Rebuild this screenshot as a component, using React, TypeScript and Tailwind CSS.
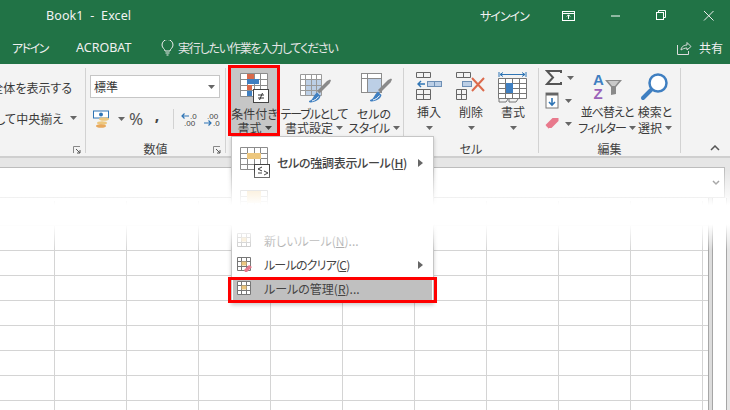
import React from "react";

const Caret = ({ c = "#666" }: { c?: string }) => (
  <svg width="7" height="4" viewBox="0 0 7 4" className="shrink-0"><path d="M0 0h7L3.5 4z" fill={c} /></svg>
);

const Launcher = () => (
  <svg width="8" height="8" viewBox="0 0 8 8"><path d="M0.5 7V0.5H7" fill="none" stroke="#888" /><path d="M3 3l4 4M7 4v3H4" fill="none" stroke="#555" /></svg>
);

const GridLines = ({ x, y, w, h, cols, rows, c = "#777" }: { x: number; y: number; w: number; h: number; cols: number; rows: number; c?: string }) => {
  const d: string[] = [];
  for (let i = 0; i <= cols; i++) d.push(`M${x + Math.round((w * i) / cols)} ${y}v${h}`);
  for (let i = 0; i <= rows; i++) d.push(`M${x} ${y + Math.round((h * i) / rows)}h${w}`);
  return <path d={d.join("")} fill="none" stroke={c} strokeWidth="1" />;
};

const Brush = () => (
  <g>
    <path d="M17 17l10-10 3-1.500 1 1-1.500 3-10 10z" fill="#8a8a8a" />
    <path d="M10 26.500c3-.5 3-5 7-8l3.500 3.500c-1 4-5 6-10 6.500-2 0-2-1.500-.5-2z" fill="#3f7fc1" />
    <path d="M12 27c2-.5 5-2 6.500-4.500" fill="none" stroke="#fff" strokeWidth="1" />
  </g>
);

const CondIcon = () => (
  <svg width="30" height="32" viewBox="0 0 30 32" className="shrink-0">
    <rect x="0.5" y="1" width="27" height="22" fill="#fff" />
    <GridLines x={0.5} y={0.5} w={27} h={23} cols={4} rows={4} c="#8c8c8c" />
    <rect x="7" y="1" width="7" height="5" fill="#d9694a" />
    <rect x="7" y="6" width="12" height="5" fill="#3f7fc1" />
    <rect x="7" y="12" width="5" height="5" fill="#d9694a" />
    <rect x="7" y="18" width="5" height="5" fill="#3f7fc1" />
    <rect x="13.5" y="16.5" width="15" height="13" fill="#fff" stroke="#444" />
    <path d="M18 22h6M18 25h6M19.500 27l3-7" fill="none" stroke="#333" />
  </svg>
);

const TableIcon = () => (
  <svg width="32" height="32" viewBox="0 0 32 32" className="shrink-0">
    <rect x="0.5" y="0.5" width="21" height="21" fill="#fff" />
    <rect x="6" y="6" width="15.5" height="15.5" fill="#bccfe6" />
    <GridLines x={0.5} y={0.5} w={21} h={21} cols={4} rows={4} c="#9a9a9a" />
    <Brush />
  </svg>
);

const StyleIcon = () => (
  <svg width="32" height="32" viewBox="0 0 32 32" className="shrink-0">
    <rect x="0.5" y="0.5" width="20" height="19" fill="#fff" stroke="#8c8c8c" />
    <rect x="6.5" y="5.5" width="14" height="14" fill="#bccfe6" stroke="#8c8c8c" />
    <path d="M0.5 5.5h6M6.500 0.5v5" stroke="#8c8c8c" />
    <Brush />
  </svg>
);

const InsertIcon = () => (
  <svg width="28" height="29" viewBox="0 0 28 29" className="shrink-0">
    <GridLines x={1.5} y={0.5} w={14} h={5} cols={2} rows={1} c="#666" />
    <GridLines x={1.5} y={17.5} w={14} h={10} cols={2} rows={2} c="#666" />
    <rect x="12.5" y="9.5" width="14" height="5" fill="#bccfe6" stroke="#6d8fb5" />
    <path d="M19.500 9.500v5" stroke="#6d8fb5" />
    <path d="M3 12h7M6 9l-3 3 3 3" fill="none" stroke="#2f75b5" strokeWidth="1.4" />
  </svg>
);

const DeleteIcon = () => (
  <svg width="32" height="29" viewBox="0 0 32 29" className="shrink-0">
    <GridLines x={1.5} y={0.5} w={14} h={5} cols={2} rows={1} c="#666" />
    <GridLines x={1.5} y={17.5} w={10} h={10} cols={2} rows={2} c="#666" />
    <rect x="7.5" y="9.5" width="9" height="5" fill="#bccfe6" stroke="#6d8fb5" />
    <path d="M17 6l12 13M29 6L17 19" fill="none" stroke="#dc6a4c" strokeWidth="2" />
  </svg>
);

const FormatIcon = () => (
  <svg width="30" height="33" viewBox="0 0 30 33" className="shrink-0">
    <path d="M1 1v5M28 1v5M2 3.500h25" fill="none" stroke="#2f75b5" />
    <path d="M2 3.500l3-2M2 3.500l3 2M27 3.500l-3-2M27 3.500l-3 2" fill="none" stroke="#2f75b5" />
    <rect x="1" y="7" width="27" height="20" fill="#fff" />
    <GridLines x={0.5} y={7.5} w={28} h={20} cols={4} rows={4} c="#777" />
    <rect x="8" y="12" width="7" height="10" fill="#3f7fc1" />
    <path d="M1 28v3h7l2-3M11 28v3h7l2-3" fill="none" stroke="#777" />
  </svg>
);

const SortIcon = () => (
  <svg width="34" height="31" viewBox="0 0 34 31" className="shrink-0">
    <path d="M12 8h17l-6 7v7l-5 1v-8z" fill="#8a8a8a" />
    <path d="M15 9h11l-4 5h-3z" fill="#c9c9c9" />
    <text x="0" y="13" fontSize="15" fontWeight="700" fill="#3f7fc1" fontFamily="'Liberation Sans',sans-serif">A</text>
    <text x="0.5" y="27" fontSize="15" fontWeight="700" fill="#9a62b8" fontFamily="'Liberation Sans',sans-serif">Z</text>
  </svg>
);

const SearchIcon = () => (
  <svg width="30" height="29" viewBox="0 0 30 29" className="shrink-0">
    <circle cx="18" cy="10" r="8.500" fill="#fff" stroke="#3f7fc1" strokeWidth="2.5" />
    <path d="M11 17L3 25" stroke="#3f7fc1" strokeWidth="4" strokeLinecap="round" />
  </svg>
);

const MiniTable = ({ clear, faded }: { clear?: boolean; faded?: boolean }) => (
  <svg width="16" height="16" viewBox="0 0 16 16" className={`shrink-0 ${faded ? "opacity-40" : ""}`}>
    <rect x="0.5" y="0.5" width="13" height="13" fill="#fff" />
    <GridLines x={0.5} y={0.5} w={13} h={13} cols={3} rows={3} c="#777" />
    <rect x="4.5" y="4.5" width="5" height="4" fill="#edc77e" />
    {clear && <path d="M7 13l5-5 3 2-5 5H8z" fill="#e8798c" />}
  </svg>
);

const Btn = ({ w, box, pt, icon, l1, l2, l2c = "h-[15px]" }: { w: string; box: string; pt: string; icon: React.ReactNode; l1: React.ReactNode; l2: React.ReactNode; l2c?: string }) => (
  <div className={`flex flex-col items-center shrink-0 ${w}`}>
    <div className={`${box} ${pt} shrink-0 flex justify-center`}>{icon}</div>
    <span className="h-[13px] whitespace-nowrap flex items-center">{l1}</span>
    <span className={`${l2c} whitespace-nowrap flex items-center gap-[3px]`}>{l2}</span>
  </div>
);

const Group = ({ w, label, launcher, children }: { w: string; label?: string; launcher?: boolean; children: React.ReactNode }) => (
  <div className={`relative shrink-0 ${w} h-[85px] mt-[4px] border-r border-[#d2d2d2] flex flex-col`}>
    <div className="h-[72px] shrink-0 flex">{children}</div>
    <div className="h-[15px] shrink-0 mt-px flex items-center justify-center text-[12px] leading-[15px] text-[#444]">{label}</div>
    {launcher && <div className="absolute right-[4px] -bottom-px flex"><Launcher /></div>}
  </div>
);

const COLS = [55, 72, 72, 72, 72, 72, 72, 72, 72, 72, 6];

export default function App() {
  return (
    <div className="relative w-[730px] h-[410px] overflow-hidden bg-white text-[#3a3a3a] font-['Noto_Sans_CJK_JP','Noto_Sans',sans-serif] [font-feature-settings:'palt']">
      {/* title */}
      <div className="h-[32px] bg-[#217346] text-[#f2f2f2] flex items-center text-[12.5px] font-['Noto_Sans','Noto_Sans_CJK_JP',sans-serif]">
        <span className="ml-[46px] w-[434px] whitespace-pre tracking-[0.1px]">Book1  -  Excel</span>
        <span className="w-[82px] text-[12px] tracking-[-1px] font-['Noto_Sans_CJK_JP',sans-serif]">サインイン</span>
        <svg width="14" height="11" viewBox="0 0 14 11" fill="none" stroke="#fff"><rect x="0.5" y="0.5" width="12" height="9" /><path d="M0.5 2.500h12M6.500 8V4M4.800 5.500l1.700-1.700 1.700 1.700" /></svg>
        <svg className="ml-[34px]" width="12" height="3" viewBox="0 0 12 3"><path d="M1 1h9" stroke="#fff" /></svg>
        <svg className="ml-[34px]" width="12" height="12" viewBox="0 0 12 12" fill="none" stroke="#fff"><rect x="0.5" y="2.500" width="7" height="7" /><path d="M2.500 2.500V0.500h7v7H7.500" /></svg>
        <svg className="ml-[35px]" width="12" height="12" viewBox="0 0 12 12" fill="none" stroke="#eee"><path d="M1 1l9.500 9.500M10.500 1L1 10.500" /></svg>
      </div>
      {/* tabs */}
      <div className="h-[32px] bg-[#217346] text-[#f0f0f0] flex items-center text-[12px]">
        <span className="ml-[12px] w-[64px] tracking-[-1.5px]">アドイン</span>
        <span className="w-[85px] font-['Noto_Sans',sans-serif] text-[12.5px]">ACROBAT</span>
        <svg width="13" height="16" viewBox="0 0 13 16" fill="none" stroke="#eee"><path d="M4 11c0-2-3-3-3-6a5 5 0 0 1 11 0c0 3-3 4-3 6zM4.500 13h4M5.500 15h2" /></svg>
        <span className="ml-[4px] w-[499px] whitespace-nowrap text-[#e6e6e6] tracking-[-1.2px]">実行したい作業を入力してください</span>
        <svg width="15" height="14" viewBox="0 0 15 14" fill="none" stroke="#ddd"><path d="M0.500 4v9.500h11V10M4 9c0-3 3-5 6-5V1.500L14 5.500 10 9V7C7.500 7 5.500 8 4 9z" /></svg>
        <span className="ml-[7px]">共有</span>
      </div>
      {/* ribbon */}
      <div className="h-[94px] bg-[#f3f3f3] border-b-2 border-[#cfcfcf] flex text-[12px] leading-[15px]">
        <Group w="w-[86px]" launcher>
          <div className="w-[85px] overflow-hidden flex flex-col">
            <div className="mt-[12px] h-[16px] w-[72px] flex justify-end whitespace-nowrap">折り返して全体を表示する</div>
            <div className="mt-[14px] h-[16px] w-[77px] flex justify-end items-center whitespace-nowrap gap-[7px]">セルを結合して中央揃え<Caret /></div>
          </div>
        </Group>
        <Group w="w-[140px]" label="数値" launcher>
          <div className="ml-[4px] w-[130px] flex flex-col">
            <div className="mt-[7px] h-[23px] bg-white border border-[#c6c6c6] flex items-center justify-between pl-[3px] pr-[4px]">
              <span>標準</span><Caret />
            </div>
            <div className="mt-[10px] h-[22px] flex items-center">
              <svg className="ml-[3px] shrink-0" width="18" height="18" viewBox="0 0 18 18"><rect x="0.5" y="1" width="15" height="7" fill="#fff" stroke="#2f75b5" /><circle cx="8" cy="4.500" r="2" fill="#2f75b5" /><ellipse cx="11" cy="9" rx="5" ry="1.800" fill="#edc77e" /><ellipse cx="9" cy="13" rx="5" ry="1.800" fill="#edc77e" /><ellipse cx="8" cy="16" rx="5" ry="1.800" fill="#e8a85c" /></svg>
              <span className="ml-[7px] flex"><Caret /></span>
              <span className="ml-[4px] -mt-[2px] w-[27px] text-[17px] text-[#555] font-['Noto_Sans',sans-serif]">%</span>
              <span className="w-[19px] -mt-[9px] font-bold text-[16px] text-[#444] leading-[12px] font-['Noto_Sans',sans-serif]">,</span>
              <span className="h-[20px] w-px bg-[#d2d2d2]" />
              <svg className="ml-[7px] shrink-0" width="17" height="15" viewBox="0 0 17 15"><path d="M8 4H1M3.500 1.500L1 4l2.500 2.500" fill="none" stroke="#2f75b5" strokeWidth="1.2" /><text x="9" y="6.500" fontSize="8" fill="#444" fontFamily="'Liberation Sans',sans-serif">.0</text><text x="3" y="14" fontSize="8" fill="#444" fontFamily="'Liberation Sans',sans-serif">.00</text></svg>
              <svg className="ml-[5px] shrink-0" width="17" height="15" viewBox="0 0 17 15"><text x="4" y="6.500" fontSize="8" fill="#444" fontFamily="'Liberation Sans',sans-serif">.00</text><path d="M1 11h7M5.500 8.500L8 11l-2.500 2.500" fill="none" stroke="#2f75b5" strokeWidth="1.2" /><text x="10" y="14" fontSize="8" fill="#444" fontFamily="'Liberation Sans',sans-serif">.0</text></svg>
            </div>
          </div>
        </Group>
        <Group w="w-[178px]">
          <div className="ml-[5px] h-[66px] bg-[#c6c6c6] w-[47px] shrink-0">
            <Btn w="w-[47px]" box="h-[39px]" pt="pt-[5px]" icon={<CondIcon />} l1="条件付き" l2={<>書式<Caret c="#444" /></>} />
          </div>
          <Btn w="w-[72px]" box="h-[39px] pl-[4px]" pt="pt-[6px]" icon={<TableIcon />} l1={<span className="tracking-[-1.2px]">テーブルとして</span>} l2={<>書式設定<Caret /></>} />
          <Btn w="w-[48px]" box="h-[39px] pl-[6px]" pt="pt-[5px]" icon={<StyleIcon />} l1="セルの" l2={<><span className="tracking-[-0.5px]">スタイル</span><Caret /></>} />
        </Group>
        <Group w="w-[135px]" label="セル">
          <div className="ml-[4px] flex">
            <Btn w="w-[42px]" box="h-[37px]" pt="pt-[4px]" icon={<InsertIcon />} l1="挿入" l2={<span className="mt-[5px] flex"><Caret /></span>} />
            <Btn w="w-[42px]" box="h-[37px]" pt="pt-[4px]" icon={<DeleteIcon />} l1="削除" l2={<span className="mt-[5px] flex"><Caret /></span>} />
            <Btn w="w-[42px]" box="h-[37px]" pt="pt-[3px]" icon={<FormatIcon />} l1="書式" l2={<span className="mt-[5px] flex"><Caret /></span>} />
          </div>
        </Group>
        <Group w="w-[142px]" label="編集">
          <div className="ml-[6px] w-[34px] flex flex-col pt-[1px]">
            <div className="flex items-center gap-[5px] h-[17px]">
              <svg className="shrink-0" width="17" height="15" viewBox="0 0 17 15"><path d="M16 3V1H2l6 6.500L2 14h14v-2" fill="none" stroke="#555" strokeWidth="2" /></svg><Caret />
            </div>
            <div className="mt-[6px] flex items-center gap-[5px] h-[17px]">
              <svg className="shrink-0" width="15" height="17" viewBox="0 0 15 17"><rect x="1" y="1" width="12" height="15" fill="#fff" stroke="#777" /><rect x="1" y="1" width="12" height="2.500" fill="#666" /><path d="M7 6v7M4 10l3 3 3-3" fill="none" stroke="#2f75b5" strokeWidth="1.6" /></svg><Caret />
            </div>
            <div className="mt-[7px] flex items-center gap-[5px] h-[15px]">
              <svg className="shrink-0" width="15" height="13" viewBox="0 0 15 13"><path d="M0.500 8l7-7h6v3l-7 7H3z" fill="#e8798c" /><path d="M1 9l3 3" stroke="#f5c6ce" /></svg><Caret />
            </div>
          </div>
          <Btn w="ml-[1px] w-[54px]" box="h-[37px] pl-[6px]" pt="pt-[4px]" l2c="h-[15px] mt-[2px]" icon={<SortIcon />} l1={<span className="tracking-[-1px]">並べ替えと</span>} l2={<><span className="tracking-[-1px]">フィルター</span><Caret /></>} />
          <Btn w="ml-[4px] w-[34px]" box="h-[37px]" pt="pt-[5px]" l2c="h-[15px] mt-[2px]" icon={<SearchIcon />} l1="検索と" l2={<>選択<Caret /></>} />
        </Group>
        <div className="flex-1 flex items-end justify-end pr-[10px] pb-[5px]">
          <svg width="10" height="6" viewBox="0 0 10 6"><path d="M1 5l4-4 4 4" fill="none" stroke="#555" strokeWidth="1.500" /></svg>
        </div>
      </div>
      {/* formula bar */}
      <div className="h-[40px] bg-[#e6e6e6] pt-[9px] pr-[5px]">
        <div className="h-[31px] bg-white border border-l-0 border-[#bdbdbd] flex items-center justify-end pr-[4px]">
          <svg width="8" height="6" viewBox="0 0 8 6"><path d="M1 1l3 3 3-3" fill="none" stroke="#777" strokeWidth="1.500" /></svg>
        </div>
      </div>
      {/* sheet */}
      <div className="flex bg-white h-[212px]">
        <div className="w-[708px] overflow-hidden pt-[3px]">
          {[0, 1, 2, 3, 4, 5, 6, 7, 8].map((r) => (
            <div key={r} className="flex h-[25px] border-b border-[#d4d4d4]">
              {COLS.map((w, i) => (
                <div key={i} style={{ width: w }} className="shrink-0 border-r border-[#d4d4d4]" />
              ))}
            </div>
          ))}
        </div>
        <div className="w-[5px] bg-[#dcdcdc] border-x border-[#a6a6a6]" />
        <div className="w-[13px]" />
        <div className="w-[1px] bg-[#a6a6a6]" />
        <div className="flex-1 bg-[#e6e6e6]" />
      </div>

      {/* dropdown menu */}
      <div className="absolute left-[231px] top-[136px] w-[203px] h-[167px] bg-white border border-[#c6c6c6] shadow-[0_2px_4px_rgba(0,0,0,0.2)] flex flex-col text-[12px] text-[#444]">
        <div className="h-[44px] shrink-0 flex items-center pl-[8px] pr-[10px] pt-[7px]">
          <svg className="shrink-0" width="32" height="32" viewBox="0 0 32 32">
            <rect x="0.5" y="0.5" width="27" height="22" fill="#fff" />
            <GridLines x={0.5} y={0.5} w={27} h={22} cols={4} rows={4} c="#8c8c8c" />
            <rect x="7" y="6" width="14" height="6" fill="#edc77e" />
            <rect x="14.5" y="17.5" width="15" height="13" fill="#fff" stroke="#444" />
            <path d="M22 20l-4 2 4 2M18 26h4M24 24l4 2-4 2" fill="none" stroke="#333" />
          </svg>
          <span className="ml-[5px] font-medium whitespace-nowrap tracking-[-0.3px]">セルの強調表示ルール(<span className="underline">H</span>)</span>
          <svg className="ml-auto shrink-0" width="5" height="8" viewBox="0 0 5 8"><path d="M0 0l5 4-5 4z" fill="#666" /></svg>
        </div>
        <div className="h-[48px] shrink-0 pl-[8px] pt-[9px]">
          <svg width="28" height="18" viewBox="0 0 28 18"><GridLines x={0.5} y={0.5} w={27} h={17} cols={4} rows={3} c="#c8c8c8" /><rect x="7" y="1" width="14" height="12" fill="#f6dfb4" /></svg>
        </div>
        <div className="h-[24px] shrink-0 flex items-center pl-[5px]">
          <MiniTable faded /><span className="ml-[11px] text-[#a6a6a6] whitespace-nowrap">新しいルール(<span className="underline">N</span>)...</span>
        </div>
        <div className="h-[24px] shrink-0 flex items-center pl-[5px] pr-[10px]">
          <MiniTable clear /><span className="ml-[11px] whitespace-nowrap tracking-[-0.8px]">ルールのクリア(<span className="underline">C</span>)</span>
          <svg className="ml-auto shrink-0" width="5" height="8" viewBox="0 0 5 8"><path d="M0 0l5 4-5 4z" fill="#666" /></svg>
        </div>
        <div className="h-[22px] shrink-0 mt-px bg-[#c0c0c0] flex items-center pl-[4px] mx-px">
          <MiniTable /><span className="ml-[11px] whitespace-nowrap">ルールの管理(<span className="underline">R</span>)...</span>
        </div>
      </div>

      {/* fade band */}
      <div className="absolute left-0 top-[170px] w-full h-[80px] pointer-events-none bg-[linear-gradient(to_bottom,rgba(255,255,255,0)_0%,rgba(255,255,255,1)_44%,rgba(255,255,255,1)_68%,rgba(255,255,255,0)_100%)]" />

      {/* red callouts */}
      <div className="absolute left-[228px] top-[65px] w-[52px] h-[71px] border-[3px] border-[#ff0000]" />
      <div className="absolute left-[228px] top-[277px] w-[209px] h-[26px] border-[3px] border-[#ff0000]" />
    </div>
  );
}
